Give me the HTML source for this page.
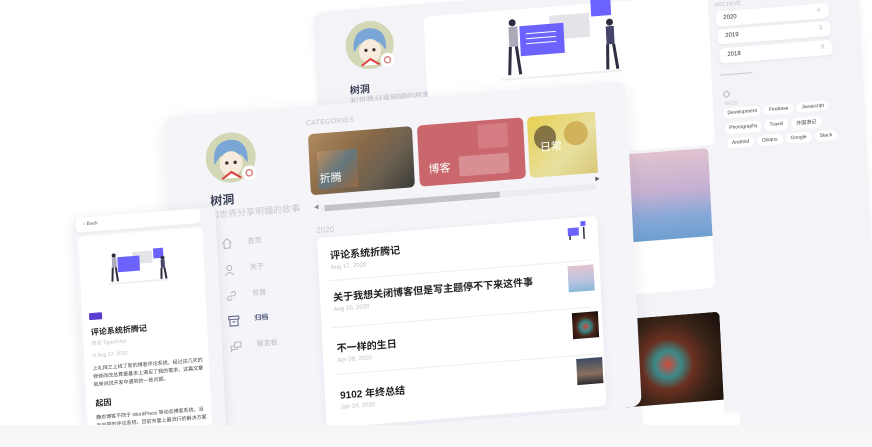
<!DOCTYPE html>
<html style="width:872px;height:447px;overflow:hidden"><head><meta charset="utf-8">
<style>
*{margin:0;padding:0;box-sizing:border-box}
body{width:872px;height:447px;overflow:hidden;background:#fff;font-family:"Liberation Sans","Noto Sans CJK SC",sans-serif;position:relative}
#clip{position:absolute;left:0;top:0;width:872px;height:447px;overflow:hidden}
#w{position:absolute;left:0;top:0;width:872px;height:447px;transform:matrix(1,-0.079,0.05,1,0,0);transform-origin:0 0}
.a{position:absolute}
.panel{background:#f4f4f9;border-radius:10px}
.card{background:#fff;border-radius:5px}
.t{white-space:nowrap}
#strip{position:absolute;left:0;top:425px;width:872px;height:22px;background:#f6f6f7}
</style></head><body>
<div id="clip">
<div id="w">
 <div class="a panel" style="left:311px;top:36.7px;width:545px;height:430px;background:#f3f3f8;box-shadow:0 2px 10px rgba(0,0,0,.04)">
  <svg class="a" style="left:31px;top:13px" width="48" height="48" viewBox="0 0 48 48"><circle cx="24" cy="24" r="24" fill="#d3d7b6"/><path d="M8 30 Q6 8 24 7 Q42 8 40 30 L34 22 L14 22Z" fill="#7aa6d6"/><ellipse cx="24" cy="30" rx="11" ry="12" fill="#f6ebdc"/><circle cx="20" cy="29" r="1.6" fill="#333"/><circle cx="28" cy="29" r="1.6" fill="#333"/><path d="M15 44 L24 38 L33 44" stroke="#d44" stroke-width="2" fill="#fff"/><circle cx="41" cy="40" r="7" fill="#fff"/><circle cx="41" cy="40" r="3" fill="none" stroke="#d88" stroke-width="1.5"/></svg>
  <div class="a t" style="left:33px;top:72px;font-size:10px;font-weight:bold;color:#3a3f55">树洞</div>
  <div class="a t" style="left:33px;top:86px;font-size:8px;color:#c4c4cc">和世界分享明媚的故事</div>
  <div class="a card" style="left:109.5px;top:13.6px;width:284px;height:150px">
   <svg class="a" style="left:75px;top:-5px" width="140" height="90" viewBox="0 0 140 90"><rect x="50" y="14" width="40" height="24" fill="#e4e4e8"/><rect x="20" y="22" width="44" height="30" fill="#6c63ff"/><g stroke="#fff" stroke-width="1"><line x1="26" y1="30" x2="56" y2="30"/><line x1="26" y1="35" x2="56" y2="35"/><line x1="26" y1="40" x2="56" y2="40"/></g><circle cx="13" cy="18" r="3.5" fill="#2f2e41"/><rect x="9" y="22" width="9" height="20" fill="#aab"/><path d="M10 42 L8 70 M16 42 L19 70" stroke="#2f2e41" stroke-width="3"/><rect x="92" y="-2" width="20" height="20" fill="#6c63ff"/><circle cx="110" cy="25" r="3.5" fill="#2f2e41"/><rect x="106" y="29" width="8" height="18" fill="#45456b"/><path d="M107 47 L106 72 M113 47 L116 72" stroke="#2f2e41" stroke-width="3"/><line x1="0" y1="74" x2="120" y2="74" stroke="#eee" stroke-width="2"/></svg>
  </div>
  <div class="a t" style="left:400px;top:22px;font-size:6px;color:#c4c4cc">ARCHIVE</div>
  <div class="a card t" style="left:400.6px;top:31.7px;width:113px;height:15px;font-size:6px;color:#333;padding:4px 8px;box-shadow:0 1px 3px rgba(0,0,0,.06)">2020<span style="float:right;color:#bbb">4</span></div>
  <div class="a card t" style="left:401.7px;top:49.8px;width:113px;height:15px;font-size:6px;color:#333;padding:4px 8px;box-shadow:0 1px 3px rgba(0,0,0,.06)">2019<span style="float:right;color:#bbb">3</span></div>
  <div class="a card t" style="left:402.8px;top:67.9px;width:113px;height:15px;font-size:6px;color:#333;padding:4px 8px;box-shadow:0 1px 3px rgba(0,0,0,.06)">2018<span style="float:right;color:#bbb">9</span></div>
  <div class="a" style="left:403px;top:94px;width:32px;height:1px;background:#ccc"></div>
  <div class="a" style="left:405px;top:111px;width:6px;height:6px;border:1px solid #bbb;border-radius:2px;transform:rotate(45deg)"></div>
  <div class="a t" style="left:405px;top:121px;font-size:5px;color:#c4c4cc">TAGS</div>
  <div class="a t" style="left:404px;top:128px;font-size:5px;color:#444;display:flex;gap:3px">
   <span class="card" style="padding:2px 4px">Development</span><span class="card" style="padding:2px 5px">Firebase</span><span class="card" style="padding:2px 5px">Javascript</span></div>
  <div class="a t" style="left:405px;top:143px;font-size:5px;color:#444;display:flex;gap:3px">
   <span class="card" style="padding:2px 4px">Photography</span><span class="card" style="padding:2px 5px">Travel</span><span class="card" style="padding:2px 5px">外国游记</span></div>
  <div class="a t" style="left:406px;top:158px;font-size:5px;color:#444;display:flex;gap:3px">
   <span class="card" style="padding:2px 5px">Android</span><span class="card" style="padding:2px 5px">Disqus</span><span class="card" style="padding:2px 5px">Google</span><span class="card" style="padding:2px 5px">Stack</span></div>
  <div class="a card" style="left:292px;top:166px;width:95px;height:140px;overflow:hidden"><div style="height:88px;background:linear-gradient(180deg,#e0c3cf 0%,#c6b0d2 45%,#86a8d8 75%,#6ea0cf 100%)"></div></div>
  <div class="a card" style="left:292px;top:330px;width:98px;height:125px;overflow:hidden"><div style="height:88px;background:radial-gradient(circle at 45% 55%,#d04a3a 0,#3a8a8a 18%,#6a3020 35%,#3a2418 60%,#140c08 100%)"></div></div>
 </div>

 <div class="a panel" style="left:156.5px;top:130.4px;width:462px;height:325px;background:#f4f4f9;box-shadow:0 4px 18px rgba(40,40,80,.08)">
  <svg class="a" style="left:40px;top:20px" width="50" height="50" viewBox="0 0 48 48"><circle cx="24" cy="24" r="24" fill="#d3d7b6"/><path d="M8 30 Q6 8 24 7 Q42 8 40 30 L34 22 L14 22Z" fill="#7aa6d6"/><ellipse cx="24" cy="30" rx="11" ry="12" fill="#f6ebdc"/><circle cx="20" cy="29" r="1.6" fill="#333"/><circle cx="28" cy="29" r="1.6" fill="#333"/><path d="M15 44 L24 38 L33 44" stroke="#d44" stroke-width="2" fill="#fff"/><circle cx="41" cy="40" r="7" fill="#fff"/><circle cx="41" cy="40" r="3" fill="none" stroke="#d88" stroke-width="1.5"/></svg>
  <div class="a t" style="left:43px;top:78px;font-size:12px;font-weight:bold;color:#3a3f55">树洞</div>
  <div class="a t" style="left:42px;top:94px;font-size:9px;color:#c8c8d0">和世界分享明媚的故事</div>
  <svg class="a" style="left:51px;top:124px" width="12" height="12" viewBox="0 0 12 12" fill="none" stroke="#b5b5c0"><path d="M1.5 6 L6 1.5 L10.5 6 M3 5 V11 H9 V5"/></svg>
  <div class="a t" style="left:78px;top:125px;font-size:7px;color:#bbb">首页</div>
  <svg class="a" style="left:52px;top:151px" width="12" height="12" viewBox="0 0 12 12" fill="none" stroke="#b5b5c0"><circle cx="6" cy="4" r="2.5"/><path d="M1.5 11.5 Q6 6 10.5 11.5"/></svg>
  <div class="a t" style="left:79px;top:151px;font-size:7px;color:#bbb">关于</div>
  <svg class="a" style="left:53px;top:177px" width="12" height="12" viewBox="0 0 12 12" fill="none" stroke="#b5b5c0"><path d="M5 7 L7 5 M4 5.5 L2.5 7 Q1 9 2.5 10 Q4 11 5.5 9.5 L6.5 8.5 M5.5 3.5 L7 2 Q8.5 1 9.5 2.5 Q11 4 9.5 5 L8 6.5"/></svg>
  <div class="a t" style="left:80px;top:177px;font-size:7px;color:#bbb">邻居</div>
  <svg class="a" style="left:54px;top:202px" width="12" height="12" viewBox="0 0 12 12" fill="none" stroke="#5a6080"><rect x="1" y="1.5" width="10" height="3"/><path d="M2 4.5 V11 H10 V4.5 M4.5 7 H7.5"/></svg>
  <div class="a t" style="left:81px;top:202px;font-size:7px;color:#5a6080;font-weight:bold">归档</div>
  <svg class="a" style="left:55px;top:228px" width="12" height="12" viewBox="0 0 12 12" fill="none" stroke="#b5b5c0"><rect x="4.5" y="1.5" width="6.5" height="5"/><path d="M4 5 H1 V10 L3 8.5 H7 V7"/></svg>
  <div class="a t" style="left:82px;top:228px;font-size:7px;color:#bbb">留言板</div>

  <div class="a t" style="left:142px;top:14px;font-size:7px;color:#c0c0c8;letter-spacing:.3px">CATEGORIES</div>
  <div class="a" style="left:143px;top:28px;width:104px;height:61px;border-radius:5px;overflow:hidden;background:linear-gradient(135deg,#b08a60 0%,#8a6a48 40%,#6a6050 70%,#3a3a38 100%)"><div style="position:absolute;left:8px;top:18px;width:40px;height:38px;background:linear-gradient(135deg,#c49060,#5a7a8a,#a06a40);opacity:.8"></div><div class="a t" style="left:10px;bottom:8px;font-size:11px;color:#fff">折腾</div></div>
  <div class="a" style="left:252px;top:28px;width:106px;height:61px;border-radius:5px;overflow:hidden;background:#c9676d"><div style="position:absolute;left:40px;top:34px;width:50px;height:20px;background:#d98e92;border-radius:2px"></div><div style="position:absolute;left:60px;top:4px;width:30px;height:24px;background:#d57c82;border-radius:2px"></div><div class="a t" style="left:10px;bottom:9px;font-size:11px;color:#fff">博客</div></div>
  <div class="a" style="left:362px;top:28px;width:68px;height:61px;border-radius:5px 0 0 5px;overflow:hidden;background:linear-gradient(135deg,#e8d050,#e8e0a0 60%,#d8c878)"><div style="position:absolute;left:6px;top:10px;width:22px;height:24px;border-radius:50%;background:#5a4a30;opacity:.7"></div><div style="position:absolute;left:36px;top:8px;width:24px;height:24px;border-radius:50%;background:#c8a040;opacity:.7"></div><div class="a t" style="left:12px;bottom:22px;font-size:11px;color:#fff">日常</div></div>
  <div class="a" style="left:152px;top:100px;width:275px;height:6px;background:#ececf0"></div>
  <div class="a" style="left:156px;top:100px;width:175px;height:6px;background:#c4c4c6"></div>
  <div class="a t" style="left:146px;top:98px;font-size:5px;color:#888">◀</div>
  <div class="a t" style="left:427px;top:92px;font-size:5px;color:#555">▶</div>

  <div class="a t" style="left:147px;top:120px;font-size:8px;color:#c4c4cc">2020</div>
  <div class="a card" style="left:147.5px;top:132px;width:280px;height:190px;box-shadow:0 2px 10px rgba(40,40,80,.06)">
   <div class="a t" style="left:12px;top:10px;font-size:10px;font-weight:bold;color:#222">评论系统折腾记</div>
   <div class="a t" style="left:12px;top:28px;font-size:6px;color:#c0c0c0">Aug 17, 2020</div>
   <svg class="a" style="left:248px;top:4px" width="24" height="18" viewBox="0 0 24 18"><rect x="2" y="6" width="11" height="8" fill="#6c63ff"/><rect x="15" y="0" width="5" height="5" fill="#6c63ff"/><path d="M4 14 V18 M18 6 V18" stroke="#2f2e41" stroke-width="1.5"/></svg>
   <div class="a" style="left:10px;top:43px;width:262px;height:1px;background:#eee"></div>
   <div class="a t" style="left:13px;top:52px;font-size:10px;font-weight:bold;color:#222">关于我想关闭博客但是写主题停不下来这件事</div>
   <div class="a t" style="left:13px;top:70px;font-size:6px;color:#c0c0c0">Aug 10, 2020</div>
   <div class="a" style="left:248px;top:48px;width:26px;height:26px;background:linear-gradient(180deg,#e3c4d0,#b8c4e0 60%,#8ab8d8)"></div>
   <div class="a" style="left:11px;top:90px;width:262px;height:1px;background:#eee"></div>
   <div class="a t" style="left:14px;top:103px;font-size:10px;font-weight:bold;color:#222">不一样的生日</div>
   <div class="a t" style="left:14px;top:121px;font-size:6px;color:#c0c0c0">Apr 08, 2020</div>
   <div class="a" style="left:250px;top:95px;width:26px;height:26px;background:radial-gradient(circle at 50% 55%,#d04a3a 0,#3a8a8a 25%,#4a2418 50%,#0c0806 100%)"></div>
   <div class="a" style="left:12px;top:137px;width:262px;height:1px;background:#eee"></div>
   <div class="a t" style="left:15px;top:150px;font-size:10px;font-weight:bold;color:#222">9102 年终总结</div>
   <div class="a t" style="left:15px;top:168px;font-size:6px;color:#c0c0c0">Jan 24, 2020</div>
   <div class="a" style="left:252px;top:141px;width:26px;height:26px;background:linear-gradient(180deg,#3a4a60,#8a7060 60%,#2a2a30)"></div>
  </div>
 </div>

 <div class="a" style="left:62px;top:223px;width:142px;height:225px;background:#f5f5f9;border-radius:6px;box-shadow:0 2px 12px rgba(40,40,80,.1)">
  <div class="a card t" style="left:2px;top:0;width:125px;height:15px;font-size:5px;color:#666;padding:4px 8px;box-shadow:0 1px 3px rgba(0,0,0,.06)">‹ Back</div>
  <div class="a card" style="left:4px;top:19px;width:124px;height:200px;overflow:hidden">
   <svg class="a" style="left:28px;top:10px" width="70" height="50" viewBox="0 0 140 90"><rect x="50" y="14" width="40" height="24" fill="#e4e4e8"/><rect x="20" y="22" width="44" height="30" fill="#6c63ff"/><circle cx="13" cy="18" r="4" fill="#2f2e41"/><rect x="9" y="22" width="9" height="20" fill="#aab"/><path d="M10 42 L8 70 M16 42 L19 70" stroke="#2f2e41" stroke-width="4"/><rect x="92" y="10" width="20" height="20" fill="#6c63ff"/><circle cx="110" cy="30" r="4" fill="#2f2e41"/><rect x="106" y="34" width="8" height="16" fill="#45456b"/><path d="M107 50 L106 72 M113 50 L116 72" stroke="#2f2e41" stroke-width="4"/><line x1="0" y1="74" x2="120" y2="74" stroke="#eee" stroke-width="3"/></svg>
   <div class="a" style="left:7px;top:77px;width:13px;height:7px;background:#5a3fd0;border-radius:1px"></div>
   <div class="a t" style="left:8px;top:91px;font-size:8px;font-weight:bold;color:#222">评论系统折腾记</div>
   <div class="a t" style="left:8px;top:104px;font-size:5px;color:#bbb">初试 TypeScript</div>
   <div class="a t" style="left:8px;top:117px;font-size:5px;color:#bbb">◷ Aug 17, 2020</div>
   <div class="a" style="left:8px;top:129px;font-size:5px;line-height:8px;color:#444;width:112px">上礼拜三上线了新的博客评论系统，经过这几天的修修改改总算是基本上满足了我的需求，这篇文章就来说说开发中遇到的一些问题。</div>
   <div class="a t" style="left:9px;top:162px;font-size:8px;font-weight:bold;color:#222">起因</div>
   <div class="a" style="left:9px;top:178px;font-size:5px;line-height:8px;color:#444;width:112px">静态博客不同于 WordPress 等动态博客系统，没有自带的评论系统，目前市面上最流行的解决方案是 Disqus。</div>
  </div>
 </div>
</div>
<svg style="position:absolute;left:0;top:0" width="872" height="447"><polygon points="406,425 641,406.5 644,425" fill="#f4f4f9"/><polygon points="740,409.8 872,399.4 872,425 740,425" fill="#f3f3f8"/></svg>
<div id="strip"></div>
</div>
</body></html>
